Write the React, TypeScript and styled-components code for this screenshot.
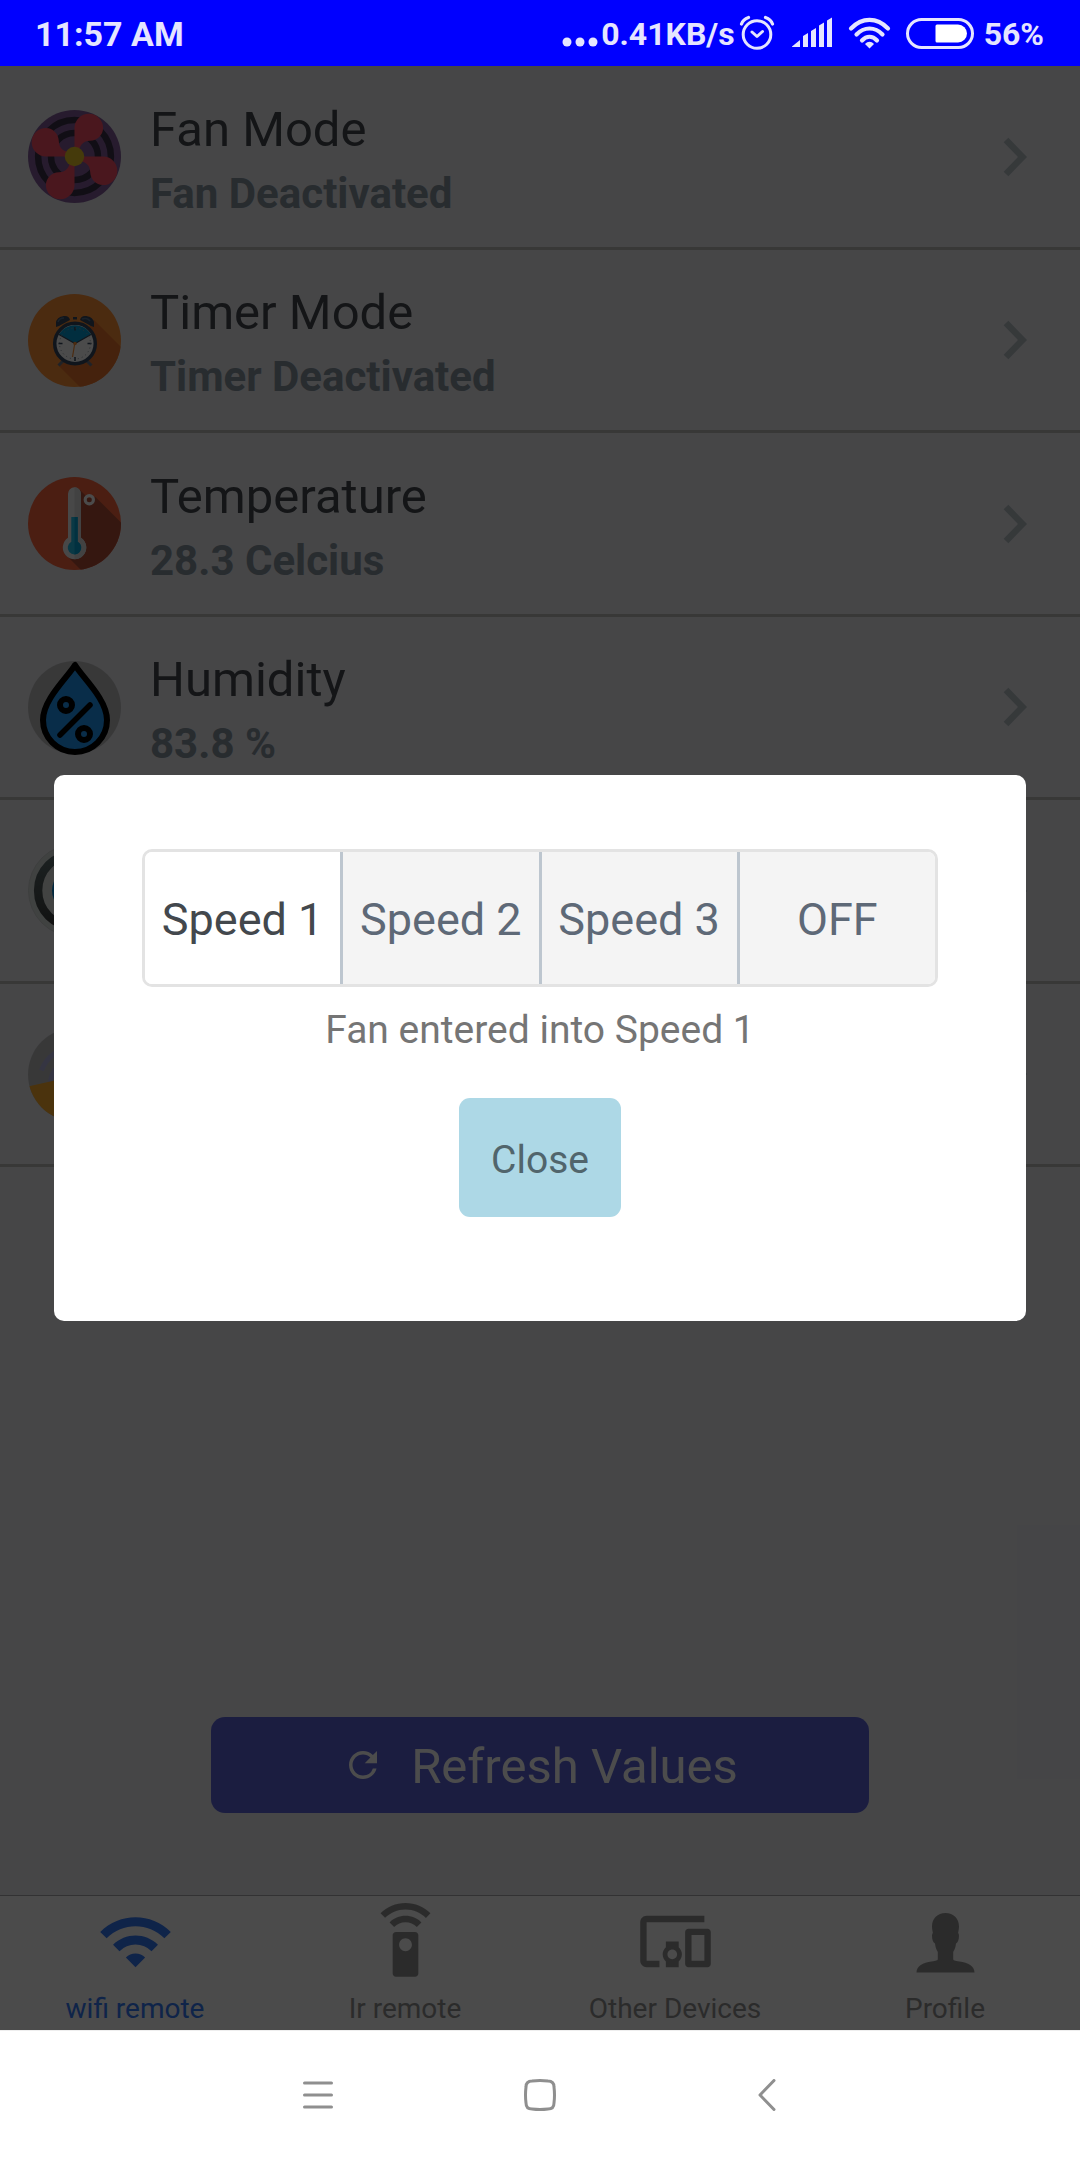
import React, { useState } from "react";
import styled, { createGlobalStyle } from "styled-components";
import { MdDevicesOther, MdRefresh, MdSettingsRemote, MdWifi } from "react-icons/md";

const GlobalStyle = createGlobalStyle`
  *, *::before, *::after { box-sizing: border-box; }
  body { margin: 0; background: #fff; font-family: Roboto, "Noto Sans", sans-serif; }
  button { font: inherit; border: 0; margin: 0; padding: 0; background: none; color: inherit; cursor: pointer; }
  svg { display: block; flex: none; }
`;

const Page = styled.div`
  display: flex;
  flex-direction: column;
  min-height: 100vh;
`;

const StatusBar = styled.header`
  display: flex;
  align-items: center;
  height: 66px;
  padding: 2px 36px 0 35px;
  background: #0000ff;
  color: #e5e5ff;
  font-weight: 700;
  font-size: 34px;
  line-height: 40px;
`;

const Clock = styled.time`
  flex: 1;
`;

const StatusIcons = styled.div`
  display: flex;
  align-items: center;
`;

const StatusText = styled.span`
  font-size: 32px;
  font-weight: 700;
`;

const Screen = styled.main`
  position: relative;
  flex: 1;
  display: flex;
  flex-direction: column;
  background: #e9e9ef;
`;

const List = styled.ul`
  display: grid;
  grid-auto-rows: 184px 183px;
  margin: 0;
  padding: 0;
  list-style: none;
`;

const Item = styled.li`
  display: flex;
  border-bottom: 3px solid #bcbbba;
`;

const ItemButton = styled.button`
  flex: 1;
  display: flex;
  align-items: center;
  gap: 29px;
  padding: 0 53px 0 28px;
  text-align: left;
`;

const ItemText = styled.span`
  flex: 1;
  display: flex;
  flex-direction: column;
  gap: 10px;
  padding-top: 6px;
`;

const ItemTitle = styled.span`
  font-size: 49px;
  line-height: 58px;
  color: #43484d;
`;

const ItemStatus = styled.span`
  font-size: 42px;
  line-height: 50px;
  font-weight: 700;
  color: #86939e;
`;

const RefreshButton = styled.button`
  display: flex;
  align-items: center;
  justify-content: center;
  gap: 27px;
  width: 61%;
  height: 96px;
  margin: auto auto 82px;
  border-radius: 14px;
  background: #5c63d8;
  color: #fff;
  font-size: 49px;
  line-height: 58px;
`;

const RefreshLabel = styled.span`
  padding-top: 4px;
`;

const TabBar = styled.nav`
  display: grid;
  grid-template-columns: repeat(4, 1fr);
  border-top: 1px solid #a7a7aa;
  background: #fafafa;
`;

const Tab = styled.button<{ $active?: boolean }>`
  display: flex;
  flex-direction: column;
  align-items: center;
  gap: 12px;
  padding: 7px 0 5px;
  color: ${(p) => (p.$active ? "#3478f6" : "#929292")};
  font-size: 28px;
  line-height: 33px;
`;

const Backdrop = styled.div`
  position: absolute;
  inset: 0;
  display: flex;
  align-items: center;
  justify-content: center;
  background: rgba(0, 0, 0, 0.7);
`;

const Dialog = styled.section`
  display: flex;
  flex-direction: column;
  align-items: center;
  width: 90%;
  padding: 74px 88px 104px;
  border-radius: 10px;
  background: #fff;
`;

const SpeedGroup = styled.div`
  display: flex;
  width: 100%;
  height: 138px;
  border: 3px solid #e3e3e3;
  border-radius: 10px;
  overflow: hidden;
`;

const SpeedOption = styled.button<{ $selected: boolean }>`
  flex: 1;
  padding-top: 4px;
  border-right: 3px solid #bdc6cf;
  background: ${(p) => (p.$selected ? "#fff" : "#f4f4f4")};
  color: ${(p) => (p.$selected ? "#43484d" : "#5e6977")};
  font-size: 45px;
  line-height: 54px;
  &:last-child { border-right: 0; }
`;

const Message = styled.p`
  margin: 20px 0 45px;
  color: #757575;
  font-size: 39px;
  line-height: 46px;
`;

const CloseButton = styled.button`
  height: 119px;
  padding: 4px 32px 0;
  border-radius: 11px;
  background: #add8e6;
  color: #51656c;
  font-size: 39px;
  line-height: 46px;
`;

const NavBar = styled.footer`
  display: grid;
  grid-template-columns: repeat(3, 222px);
  justify-content: center;
  height: 130px;
  box-shadow: inset 0 1px #eee;
  background: #fff;
`;

const NavButton = styled.button`
  display: flex;
  align-items: center;
  justify-content: center;
`;

const FanIcon = () => (
  <svg width="93" height="93" viewBox="0 0 93 93" aria-hidden="true">
    <circle cx="46.5" cy="46.5" r="46.5" fill="#825d99" />
    <g fill="none" stroke="#3a3046" strokeWidth="6.5">
      <circle cx="46.5" cy="46.5" r="36.4" />
      <circle cx="46.5" cy="46.5" r="23.5" />
    </g>
    {[0, 90, 180, 270].map((turn) => (
      <path
        key={turn}
        d="M46.5 46.5V18a14.3 14.3 0 0 1 28.6 0c0 7-6 12.600-13 12.800C54 31 51.500 36 50.500 44Z"
        fill="#f84e64"
        transform={`rotate(${turn} 46.5 46.5)`}
      />
    ))}
    <circle cx="46.5" cy="46.5" r="9.700" fill="#e6c226" />
  </svg>
);

const TimerIcon = () => (
  <svg width="93" height="93" viewBox="0 0 93 93" aria-hidden="true">
    <clipPath id="timer-disc"><circle cx="46.5" cy="46.5" r="46.5" /></clipPath>
    <g clipPath="url(#timer-disc)">
      <rect width="93" height="93" fill="#fa8f37" />
      <path d="M66 26l27 27v40H52L31 72Z" fill="#e6732d" />
    </g>
    <path d="M35 67l-4.500 4.500M59 67l4.500 4.500" stroke="#6d7480" strokeWidth="3" />
    <path d="M28 33v-5c1-4 5-6 9-6 3 0 4 1 5 4L31 32ZM66 33v-5c-1-4-5-6-9-6-3 0-4 1-5 4l11 6Z" fill="#37485e" />
    <path d="M30 28c1-3 3-4 6-4M54 25c2-1 6-1 8 2" fill="none" stroke="#56708c" strokeWidth="1.500" />
    <rect x="45" y="23" width="4" height="2.500" fill="#37485e" />
    <circle cx="47" cy="49.500" r="20.300" fill="#fafafa" stroke="#37485e" strokeWidth="3.500" />
    <path d="M47 49.500L31 40.500A18.500 18.500 0 0 1 63 40.500Z" fill="#049cd2" />
    <path d="M31 40.500l16 9 16-9" fill="none" stroke="#37485e" strokeWidth="1.200" />
    <path d="M47 33v3.500M47 63v4M30.500 49.500h4M59.500 49.500h4" stroke="#37485e" strokeWidth="1.600" />
    <circle cx="47" cy="49.500" r="15.500" fill="none" stroke="#8b939d" strokeWidth="1" strokeDasharray="1 3.060" />
    <path d="M47 48l-2.500 15" stroke="#fa8f37" strokeWidth="1.200" />
    <circle cx="47" cy="49.500" r="1.800" fill="#fa8f37" />
  </svg>
);

const ThermometerIcon = () => (
  <svg width="93" height="93" viewBox="0 0 93 93" aria-hidden="true">
    <clipPath id="temperature-disc"><circle cx="46.5" cy="46.5" r="46.5" /></clipPath>
    <g clipPath="url(#temperature-disc)">
      <rect width="93" height="93" fill="#fa643c" />
      <path d="M51 12l9 9 7.500-1L93 45.500V93H53L38 78Z" fill="#b14e37" />
    </g>
    <path d="M40 16.800a6.500 6.500 0 0 1 13 0v44a11.700 11.700 0 1 1-13 0Z" fill="#f2f2f2" />
    <path d="M46.500 10.300a6.500 6.500 0 0 1 6.500 6.500v44a11.700 11.700 0 0 1-6.500 21.500Z" fill="#dcdcdc" />
    <path d="M43.300 40h6.400v24.800a6.800 6.800 0 1 1-6.400 0Z" fill="#24bfe8" />
    <path d="M46.500 40h3.200v24.800a6.800 6.800 0 0 1-3.200 12.700Z" fill="#04a5d6" />
    <circle cx="61.300" cy="22.700" r="4.100" fill="none" stroke="#fafafa" strokeWidth="3.200" />
  </svg>
);

const HumidityIcon = () => (
  <svg width="93" height="93" viewBox="0 0 93 93" aria-hidden="true" overflow="visible">
    <circle cx="46.5" cy="46.5" r="46.5" fill="#bdbdbd" />
    <path
      d="M47 4C40 16 15 38 15 59a32 32 0 0 0 64 0C79 38 54 16 47 4Z"
      fill="#2196f3"
      stroke="#000"
      strokeWidth="6"
      strokeLinejoin="round"
    />
    <g fill="none" stroke="#000" strokeWidth="6" strokeLinecap="round">
      <circle cx="38" cy="44" r="6" />
      <circle cx="56" cy="73" r="6" />
      <path d="M32 74L62 44" strokeWidth="5.500" />
    </g>
  </svg>
);

const GaugeIcon = () => (
  <svg width="93" height="93" viewBox="0 0 93 93" aria-hidden="true">
    <linearGradient id="gauge-rim" x1="0" y1="0" x2="0" y2="1">
      <stop offset="0" stopColor="#5d7070" />
      <stop offset="1" stopColor="#3c3c3c" />
    </linearGradient>
    <circle cx="46.5" cy="46.5" r="46" fill="#d8dcda" stroke="#cdd1cf" />
    <circle cx="46.5" cy="46.5" r="36.400" fill="#dddfde" stroke="url(#gauge-rim)" strokeWidth="8.400" />
    <circle cx="46.5" cy="46.5" r="22.500" fill="#0487d2" />
  </svg>
);

const SignalLampIcon = () => (
  <svg width="93" height="93" viewBox="0 0 93 93" aria-hidden="true">
    <clipPath id="lamp-disc"><circle cx="46.5" cy="46.5" r="46.5" /></clipPath>
    <g clipPath="url(#lamp-disc)">
      <rect width="93" height="93" fill="#bdbdbd" />
      <g fill="none" stroke="#b2b2dc" strokeWidth="5">
        <path d="M13.500 42.500A35 35 0 0 1 79.500 42.500" />
        <path d="M22.500 56A24 24 0 0 1 70.500 56" />
      </g>
      <path d="M0 58.500L46.500 48 93 58.500V93H0Z" fill="#faab2d" />
    </g>
  </svg>
);

const Chevron = () => (
  <svg width="24" height="40" viewBox="0 0 24 40" aria-hidden="true">
    <path d="M3 3l16.500 17L3 37" fill="none" stroke="#b4bec3" strokeWidth="6.500" />
  </svg>
);

const ProfileIcon = () => (
  <svg width="77" height="77" viewBox="0 0 77 77" aria-hidden="true" fill="currentColor">
    <path d="M9.500 69.500c0-6.500 6.500-9.800 15-11 4.500-.6 6.300-1 6.300-2.500V49c-1.600-2.500-2.400-5-2.800-8.500-1.800-.8-3-4-3-7.500 0-1.500.3-2.400.9-3-.5-2.500-.9-4.500-.9-6.500 0-8 5.500-13.500 13.500-13.500S52 15.500 52 23.500c0 2-.4 4-.9 6.500.6.600.9 1.500.9 3 0 3.500-1.200 6.700-3 7.500-.4 3.500-1.200 6-2.800 8.500v7c0 1.500 1.800 1.900 6.300 2.500 8.500 1.200 15 4.500 15 11Z" />
  </svg>
);

const DotsIcon = () => (
  <svg width="39" height="50" viewBox="0 0 39 50" fill="currentColor" aria-hidden="true">
    <circle cx="5" cy="33" r="4.500" /><circle cx="18" cy="33" r="4.500" /><circle cx="31" cy="33" r="4.500" />
  </svg>
);

const AlarmIcon = () => (
  <svg width="47" height="50" viewBox="3 1 47 50" fill="none" stroke="currentColor" aria-hidden="true">
    <circle cx="25" cy="26.500" r="13.800" strokeWidth="3" />
    <path d="M9.500 16c1-3 4-5.500 7-6.500M40.500 16c-1-3-4-5.500-7-6.500" strokeWidth="3.200" strokeLinecap="round" />
    <path d="M20 24l5 4.500 5.500-5" strokeWidth="3" strokeLinecap="round" strokeLinejoin="round" />
  </svg>
);

const SignalIcon = () => (
  <svg width="66" height="50" viewBox="0 1 66 50" fill="currentColor" aria-hidden="true">
    <path d="M10 38.500l8-6.500v7H10ZM21 28l5-3v14h-5ZM29 23l5-3v19h-5ZM37 17.500l5-3V39h-5ZM45 12.500l5-3V39h-5Z" />
  </svg>
);

const StatusWifiIcon = () => (
  <svg width="58" height="50" viewBox="0 1 58 50" fill="none" stroke="currentColor" aria-hidden="true">
    <g strokeWidth="4.200" strokeLinecap="round">
      <path d="M3 20.500c11-11.500 26-11.500 37 0" />
      <path d="M8.500 26.500c7.500-8 18.500-8 26 0" />
      <path d="M14 32.500c4.500-5 10.500-5 15 0" />
    </g>
    <path d="M17 36c3-3 6-3 9 0l-4.500 4.500Z" fill="currentColor" stroke="none" />
  </svg>
);

const BatteryIcon = () => (
  <svg width="78" height="50" viewBox="0 1 78 50" aria-hidden="true">
    <rect x="1.500" y="11.500" width="65" height="28" rx="14" fill="none" stroke="currentColor" strokeWidth="3" />
    <path d="M31 16.500h21a9 9 0 0 1 0 18H31a1.500 1.500 0 0 1-1.500-1.500V18a1.500 1.500 0 0 1 1.500-1.500Z" fill="#fff" />
  </svg>
);

const items = [
  { title: "Fan Mode", status: "Fan Deactivated", Icon: FanIcon },
  { title: "Timer Mode", status: "Timer Deactivated", Icon: TimerIcon },
  { title: "Temperature", status: "28.3 Celcius", Icon: ThermometerIcon },
  { title: "Humidity", status: "83.8 %", Icon: HumidityIcon },
  { title: "", status: "", Icon: GaugeIcon },
  { title: "", status: "", Icon: SignalLampIcon },
];

const tabs = [
  { label: "wifi remote", Icon: MdWifi },
  { label: "Ir remote", Icon: MdSettingsRemote },
  { label: "Other Devices", Icon: MdDevicesOther },
  { label: "Profile", Icon: ProfileIcon },
];

const speeds = ["Speed 1", "Speed 2", "Speed 3", "OFF"];

export default function App() {
  const [speed, setSpeed] = useState("Speed 1");
  const [tab, setTab] = useState("wifi remote");
  const [open, setOpen] = useState(true);

  return (
    <Page>
      <GlobalStyle />
      <StatusBar>
        <Clock>11:57 AM</Clock>
        <StatusIcons>
          <DotsIcon />
          <StatusText>0.41KB/s</StatusText>
          <AlarmIcon />
          <SignalIcon />
          <StatusWifiIcon />
          <BatteryIcon />
          <StatusText>56%</StatusText>
        </StatusIcons>
      </StatusBar>

      <Screen>
        <List>
          {items.map(({ title, status, Icon }, index) => (
            <Item key={index}>
              <ItemButton type="button" onClick={() => setOpen(true)}>
                <Icon />
                <ItemText>
                  <ItemTitle>{title}</ItemTitle>
                  <ItemStatus>{status}</ItemStatus>
                </ItemText>
                <Chevron />
              </ItemButton>
            </Item>
          ))}
        </List>

        <RefreshButton type="button">
          <MdRefresh size={42} />
          <RefreshLabel>Refresh Values</RefreshLabel>
        </RefreshButton>

        <TabBar>
          {tabs.map(({ label, Icon }) => (
            <Tab key={label} type="button" $active={label === tab} onClick={() => setTab(label)}>
              <Icon size={77} />
              {label}
            </Tab>
          ))}
        </TabBar>

        {open && (
          <Backdrop>
            <Dialog role="dialog" aria-modal="true">
              <SpeedGroup role="group">
                {speeds.map((name) => (
                  <SpeedOption
                    key={name}
                    type="button"
                    $selected={name === speed}
                    aria-pressed={name === speed}
                    onClick={() => setSpeed(name)}
                  >
                    {name}
                  </SpeedOption>
                ))}
              </SpeedGroup>
              <Message>Fan entered into {speed}</Message>
              <CloseButton type="button" onClick={() => setOpen(false)}>
                Close
              </CloseButton>
            </Dialog>
          </Backdrop>
        )}
      </Screen>

      <NavBar>
        <NavButton type="button">
          <svg width="32" height="32" viewBox="0 0 32 32" stroke="#8f8f8f" strokeWidth="3" strokeLinecap="round" aria-hidden="true">
            <path d="M2.500 4h27M2.500 16h27M2.500 28h27" />
          </svg>
        </NavButton>
        <NavButton type="button">
          <svg width="32" height="32" viewBox="0 0 32 32" fill="none" stroke="#8f8f8f" strokeWidth="3" aria-hidden="true">
            <path d="M8 2Q16 1 24 2Q30 2 30 8Q31 16 30 24Q30 30 24 30Q16 31 8 30Q2 30 2 24Q1 16 2 8Q2 2 8 2Z" />
          </svg>
        </NavButton>
        <NavButton type="button">
          <svg width="32" height="32" viewBox="0 0 32 32" fill="none" stroke="#8f8f8f" strokeWidth="3" strokeLinecap="round" strokeLinejoin="round" aria-hidden="true">
            <path d="M28 1.500L14 16l14 14.500" />
          </svg>
        </NavButton>
      </NavBar>
    </Page>
  );
}
